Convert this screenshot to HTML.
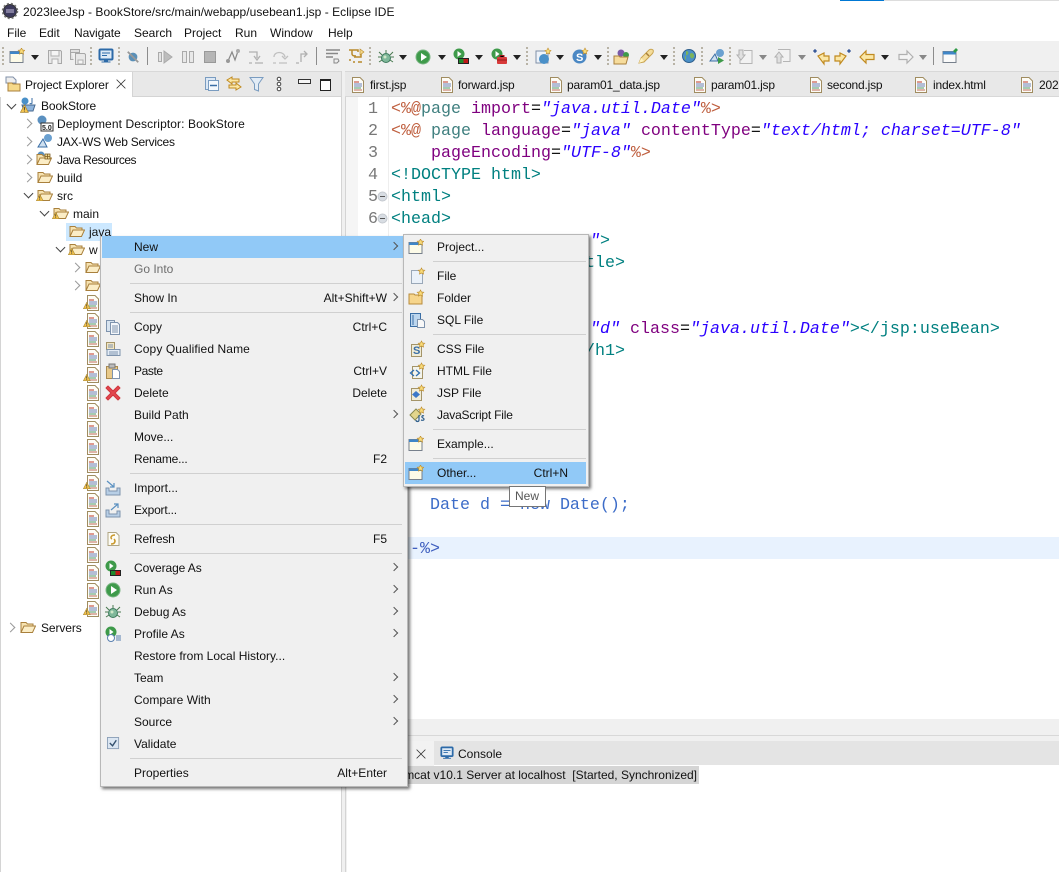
<!DOCTYPE html>
<html><head><meta charset="utf-8"><title>Eclipse</title>
<style>
html,body{margin:0;padding:0;background:#fff;}
#r{position:relative;width:1059px;height:872px;overflow:hidden;background:#fff;font:12px "Liberation Sans","Noto Sans CJK KR",sans-serif;color:#111;}
.b{position:absolute;}
.t{position:absolute;white-space:nowrap;line-height:16px;margin-top:1px;}
.tb{letter-spacing:-.2px;}
.c{position:absolute;white-space:pre;font:16.67px/22px "Liberation Mono",monospace;margin-top:1px;}
.i{position:absolute;width:16px;height:16px;overflow:visible;}
.a{position:absolute;width:0;height:0;border-left:4.5px solid transparent;border-right:4.5px solid transparent;border-top:5px solid #222;top:55px;}
.a.g{border-top-color:#888;}
.d{position:absolute;top:47px;width:2px;height:18px;background:repeating-linear-gradient(#b8b3a6 0 2px,transparent 2px 4px);}
.s{position:absolute;left:130px;width:272px;height:1px;background:#d0d0d0;}
.s2{position:absolute;left:433px;width:153px;height:1px;background:#d0d0d0;}
.ar{position:absolute;left:391px;width:5px;height:5px;border-top:1px solid #555;border-right:1px solid #555;transform:rotate(45deg);}
.tg{position:absolute;width:6px;height:6px;border-top:1.5px solid #9a9a9a;border-right:1.5px solid #9a9a9a;transform:rotate(45deg);}
.to{position:absolute;width:6px;height:6px;border-bottom:1.5px solid #444;border-right:1.5px solid #444;transform:rotate(45deg);}
.p{color:#bf5f3f}.n{color:#3f7f7f}.at{color:#7f007f}.st{color:#2a00ff;font-style:italic}.tag{color:#008080}
</style></head><body>
<svg width="0" height="0" style="position:absolute">
<defs>
<symbol id="file" viewBox="0 0 16 16"><path d="M2.500.5h7.500l3.500 3.500v11.500h-11z" fill="#fdfcf6" stroke="#a08c60"/><path d="M4 5h5" stroke="#c0392b"/><path d="M4 7h8" stroke="#6a7fb5"/><path d="M4 9h8" stroke="#6a7fb5"/><path d="M4 11h7" stroke="#4f9a6a"/><path d="M4 13h8" stroke="#c06a5a"/></symbol>
<symbol id="fold" viewBox="0 0 16 16"><path d="M1 13.500V3.500h5l1.500 1.500h5.500v2.500" fill="#f6e2b0" stroke="#a9803c"/><path d="M1 13.500l3-6.500h11.500l-3 6.500z" fill="#fbedc6" stroke="#a9803c"/></symbol>
<symbol id="warn" viewBox="0 0 16 16"><path d="M5 4.500L9.500 13H.5z" fill="#f5c44e" stroke="#a88630" stroke-width=".8"/><path d="M5 7v3.200M5 11v1" stroke="#333"/></symbol>
<symbol id="nw" viewBox="0 0 16 16"><rect x="1" y="3.500" width="13" height="11" fill="#fdfbe8" stroke="#77808c"/><rect x="1" y="3.500" width="13" height="2.500" fill="#3f86c8"/><path d="M12.500 0l1 2 2.200.300-1.600 1.500.400 2.200-2-1-2 1 .400-2.200-1.600-1.500 2.200-.300z" fill="#f9dc7a" stroke="#c09030" stroke-width=".7"/></symbol>
<symbol id="run" viewBox="0 0 16 16"><circle cx="8" cy="8" r="7" fill="#3e9a4a" stroke="#7ab583"/><path d="M6 4l6 4-6 4z" fill="#fff"/></symbol>
<symbol id="bug" viewBox="0 0 16 16"><path d="M1 3l3 3M15 3l-3 3M0 8h3M16 8h-3M1 13l3-2M15 13l-3-2M8 1v3" stroke="#4a7a50"/><circle cx="8" cy="9" r="4.500" fill="#7fb89a" stroke="#3d7a5c"/><circle cx="7" cy="8" r="1.500" fill="#d0e8c8"/></symbol>
<symbol id="mon" viewBox="0 0 16 16"><rect x="1.500" y="1.500" width="13" height="10" rx="1" fill="#dfeaf5" stroke="#2d6aa8" stroke-width="2"/><path d="M4 5h8M4 7.500h5" stroke="#2d6aa8"/><path d="M6 12h4v1.500h2.500v1h-9v-1H6z" fill="#2d6aa8"/></symbol>
<symbol id="gl" viewBox="0 0 16 16"><circle cx="8" cy="8" r="6.500" fill="#4a90c8" stroke="#2f5f8c"/><path d="M5 3c3 0 3 3 1 4s-3 3-1 5M10 5c2 0 3 1 3 3s-2 3-3 2-2-4 0-5z" fill="#7cb35a"/></symbol>
<symbol id="x" viewBox="0 0 16 16"><path d="M3 3l10 10M13 3L3 13" stroke="#333" stroke-width="1"/></symbol>
</defs>
</svg>
<div id="r">
<!-- title -->
<div class="b" style="left:840px;top:0;width:44px;height:1px;background:#0078d4"></div>
<div class="b" style="left:884px;top:0;width:175px;height:1px;background:#ddd"></div>
<svg class="i" style="left:2px;top:3px"><circle cx="8" cy="8" r="6.500" fill="#3d3a5c" stroke="#333"/><circle cx="8" cy="8" r="7.500" fill="none" stroke="#777" stroke-dasharray="2 2" stroke-width="1.500"/><path d="M4 7h8M4 9h8" stroke="#c8c0e0"/></svg>
<div class="t" style="left:23px;top:3px;letter-spacing:.03px">2023leeJsp - BookStore/src/main/webapp/usebean1.jsp - Eclipse IDE</div>
<div class="t" style="left:7px;top:24px">File</div>
<div class="t" style="left:39px;top:24px">Edit</div>
<div class="t" style="left:74px;top:24px;letter-spacing:-.1px">Navigate</div>
<div class="t" style="left:134px;top:24px">Search</div>
<div class="t" style="left:184px;top:24px">Project</div>
<div class="t" style="left:235px;top:24px">Run</div>
<div class="t" style="left:270px;top:24px">Window</div>
<div class="t" style="left:328px;top:24px">Help</div>
<!-- toolbar -->
<div class="b" style="left:0;top:41px;width:1059px;height:30px;background:#f0f0f0"></div>
<div class="d" style="left:2px"></div><div class="d" style="left:90px"></div><div class="d" style="left:118px"></div><div class="d" style="left:369px"></div><div class="d" style="left:526px"></div><div class="d" style="left:607px"></div><div class="d" style="left:673px"></div><div class="d" style="left:701px"></div><div class="d" style="left:729px"></div>
<div class="b" style="left:147px;top:47px;width:1px;height:18px;background:#8c8c8c"></div>
<div class="b" style="left:316px;top:47px;width:1px;height:18px;background:#8c8c8c"></div>
<div class="b" style="left:933px;top:47px;width:1px;height:18px;background:#8c8c8c"></div>
<svg class="i" style="left:9px;top:48px"><use href="#nw"/></svg><div class="a" style="left:31px"></div>
<svg class="i" style="left:47px;top:49px"><path d="M1.500 1.500h12l1 1v12h-13z" fill="#e8e8e8" stroke="#a8a8a8"/><path d="M4 2v5h8V2M5 15v-5h6v5" fill="#f5f5f5" stroke="#b0b0b0"/></svg>
<svg class="i" style="left:70px;top:49px"><path d="M.5.500h9v3h-9zM.5.500v10h3" fill="#e0e0e0" stroke="#a8a8a8"/><path d="M5.500 4.500h9l1 1v10h-10z" fill="#e8e8e8" stroke="#a8a8a8"/><path d="M8 11v4h5v-4z" fill="#f5f5f5" stroke="#b0b0b0"/></svg>
<svg class="i" style="left:98px;top:48px"><use href="#mon"/></svg>
<svg class="i" style="left:126px;top:50px;width:14px;height:14px" viewBox="0 0 16 16"><circle cx="8" cy="8" r="5" fill="#5a90b8"/><path d="M2 2l12 12" stroke="#999" stroke-width="2"/></svg>
<svg class="i" style="left:157px;top:49px"><path d="M1.500 3.500h3v9h-3z" fill="#e4e4e4" stroke="#aaa"/><path d="M7 2l8 6-8 6z" fill="#bdbdbd" stroke="#aaa"/></svg>
<svg class="i" style="left:180px;top:49px"><path d="M2.500 2.500h4v11h-4zM9.500 2.500h4v11h-4z" fill="#e8e8e8" stroke="#aaa"/></svg>
<svg class="i" style="left:202px;top:49px"><rect x="2.500" y="2.500" width="11" height="11" fill="#b5b5b5" stroke="#999"/></svg>
<svg class="i" style="left:225px;top:48px"><path d="M3 13L7 4l3 8 3-9" fill="none" stroke="#888" stroke-width="1.200"/><circle cx="3" cy="13" r="2" fill="#999"/><circle cx="13" cy="3" r="2" fill="#aaa"/></svg>
<svg class="i" style="left:248px;top:49px"><path d="M1 3h8v6M6 7l3 4 3-4M1 14h3M7 14h8" fill="none" stroke="#b0b0b0" stroke-width="1.300"/></svg>
<svg class="i" style="left:272px;top:49px"><path d="M2 8c0-6 10-6 11 0M10 7l3 3 3-3M1 14h3M7 14h8" fill="none" stroke="#c0c0c0" stroke-width="1.300"/></svg>
<svg class="i" style="left:295px;top:49px"><path d="M6 13V5h5M9 2l3 3-3 3M1 14h3" fill="none" stroke="#b0b0b0" stroke-width="1.300"/></svg>
<svg class="i" style="left:325px;top:48px"><path d="M1 2h14M1 5.500h12M1 9h7" stroke="#888" stroke-width="1.500"/><path d="M9 11h4l1 2-2 2H9z" fill="#eee" stroke="#888"/></svg>
<svg class="i" style="left:348px;top:48px"><path d="M1 2h9v2M4 2v4c0 2 3 2 4 2M13 3v6H6M1 12h2M5 14h2M10 14h4" fill="none" stroke="#b8892a" stroke-width="1.500"/><path d="M12 1l4 3-4 3z" fill="#f3d88a" stroke="#b8892a" stroke-width=".6"/></svg>
<svg class="i" style="left:378px;top:49px"><use href="#bug"/></svg><div class="a" style="left:399px"></div>
<svg class="i" style="left:415px;top:49px"><use href="#run"/></svg><div class="a" style="left:438px"></div>
<svg class="i" style="left:453px;top:48px"><circle cx="6" cy="6" r="5.500" fill="#3e9a4a"/><path d="M4.500 3l4 3-4 3z" fill="#fff"/><rect x="5.500" y="10.500" width="10" height="5" fill="#1d8a2d" stroke="#222"/><rect x="10.500" y="11" width="4.500" height="4" fill="#c01818"/></svg><div class="a" style="left:475px"></div>
<svg class="i" style="left:491px;top:48px"><circle cx="6" cy="6" r="5.500" fill="#3e9a4a"/><path d="M4.500 3l4 3-4 3z" fill="#fff"/><rect x="6" y="9" width="10" height="7" rx="1" fill="#d83a3a"/><path d="M9 9V7.500h4V9M6 12h10" stroke="#9a1c1c"/></svg><div class="a" style="left:513px"></div>
<svg class="i" style="left:535px;top:48px"><rect x="1" y="3" width="12" height="12" fill="#eef3fa" stroke="#8090a8"/><circle cx="9" cy="11" r="5" fill="#4a90c8"/><path d="M13 0l1 2 2 .500-1.500 1.500.300 2-1.800-1-1.800 1 .300-2L10 2.500l2-.500z" fill="#f9dc7a" stroke="#c09030" stroke-width=".6"/></svg><div class="a" style="left:556px"></div>
<svg class="i" style="left:572px;top:48px"><circle cx="7.500" cy="8.500" r="7" fill="#4b88c4"/><text x="4" y="13" font-size="11" font-weight="bold" fill="#fff" font-family="Liberation Sans">S</text><path d="M13 0l1 2 2 .500-1.500 1.500.300 2-1.800-1-1.800 1 .300-2L10 2.500l2-.500z" fill="#f9dc7a" stroke="#c09030" stroke-width=".6"/></svg><div class="a" style="left:594px"></div>
<svg class="i" style="left:614px;top:49px"><circle cx="7" cy="4" r="3.500" fill="#7a5aa8"/><circle cx="12" cy="6" r="3" fill="#3e9a4a"/><path d="M0 15V7h5l1 1h8l-2 7z" fill="#f6dc9c" stroke="#a9803c"/></svg>
<svg class="i" style="left:638px;top:48px"><path d="M1 15l2-5 8-8c1-1 3-1 4 0s0 3-1 4l-8 8z" fill="#f4dc9a" stroke="#c9a450"/><path d="M1 15l2-5 3 3z" fill="#fff3c0"/><path d="M8 5l3 3" stroke="#a9803c" stroke-width="1.500"/></svg><div class="a" style="left:660px"></div>
<svg class="i" style="left:681px;top:48px"><use href="#gl"/></svg>
<svg class="i" style="left:709px;top:48px"><path d="M1 13L6 6l3 7z" fill="#cfe0f0" stroke="#3a6ea5"/><circle cx="11" cy="5" r="4" fill="#6aa0d0"/><path d="M9 9l6 3.500-6 3.500z" fill="#3e9a4a"/></svg>
<svg class="i" style="left:737px;top:49px"><path d="M7 1.500h8v13H3v-4" fill="#f2f2f2" stroke="#b5b5b5"/><path d="M2 1h4v5h2l-4 5-4-5h2z" fill="#e0e0e0" stroke="#b0b0b0"/></svg><div class="a g" style="left:759px"></div>
<svg class="i" style="left:775px;top:48px"><path d="M3 1.500h12v12H8" fill="#f2f2f2" stroke="#b5b5b5"/><path d="M6 15h-4V9H0l4-5 4 5H6z" fill="#e0e0e0" stroke="#b0b0b0"/></svg><div class="a g" style="left:798px"></div>
<svg class="i" style="left:813px;top:49px"><path d="M5 7l6-3v3h5v5h-5v3z" fill="#fbe7a6" stroke="#c08a20" stroke-width="1.200"/><path d="M1 1l2 2M3 1L1 3M4 2H0M2 0v4" stroke="#3a5a9a"/></svg>
<svg class="i" style="left:835px;top:49px"><path d="M11 7L5 4v3H0v5h5v3z" fill="#fbe7a6" stroke="#c08a20" stroke-width="1.200"/><path d="M13 1l2 2M15 1l-2 2M16 2h-4M14 0v4" stroke="#3a5a9a"/></svg>
<svg class="i" style="left:859px;top:49px"><path d="M1 8l6-6v3.500h8v5H7V14z" fill="#fbe7a6" stroke="#c08a20" stroke-width="1.200"/></svg><div class="a" style="left:881px"></div>
<svg class="i" style="left:898px;top:49px"><path d="M15 8L9 2v3.500H1v5h8V14z" fill="#f4f4f4" stroke="#b0b0b0" stroke-width="1.200"/></svg><div class="a g" style="left:919px"></div>
<svg class="i" style="left:942px;top:48px"><rect x="1" y="3.500" width="13" height="11" fill="#fafafa" stroke="#77808c"/><rect x="1" y="3.500" width="13" height="3" fill="#3f86c8"/><path d="M9 7l3-3-1-1 3-3 2 2-3 3-1-1-3 3z" fill="#2f9a46"/></svg>
<!-- panels -->
<div class="b" style="left:0;top:71px;width:341px;height:25px;background:#e8e8e8;border-top:1px solid #d8d8d8;box-sizing:border-box"></div>
<div class="b" style="left:0;top:72px;width:133px;height:25px;background:#fff;border-right:1px solid #d4d4d4;box-sizing:border-box"></div>
<div class="b" style="left:133px;top:96px;width:208px;height:1px;background:#d4d4d4"></div>
<div class="b" style="left:341px;top:71px;width:6px;height:801px;background:#f0f0f0"></div>
<div class="b" style="left:341px;top:71px;width:1px;height:801px;background:#d4d4d4"></div>
<div class="b" style="left:0;top:97px;width:1px;height:775px;background:#d4d4d4"></div>
<div class="b" style="left:345px;top:71px;width:714px;height:26px;background:#e8e8e8;border-top:1px solid #d8d8d8;border-bottom:1px solid #d8d8d8;box-sizing:border-box"></div>
<svg class="i" style="left:5px;top:76px"><path d="M1 1h7l3 3v3H1z" fill="#eee" stroke="#8090a8"/><path d="M3 15V7h4l1 1h7v7z" fill="#f6d98a" stroke="#a9803c"/></svg>
<div class="t" style="left:25px;top:76px;letter-spacing:-.1px">Project Explorer</div>
<svg class="i" style="left:114px;top:77px;width:14px;height:14px" viewBox="0 0 16 16"><use href="#x"/></svg>
<svg class="i" style="left:204px;top:76px"><rect x="1.500" y="1.500" width="10" height="12" fill="#dce8f5" stroke="#7a9cc0"/><rect x="4.500" y="4.500" width="10" height="10" fill="#f5f9fd" stroke="#7a9cc0"/><path d="M6 9.500h7" stroke="#3a6ea5" stroke-width="1.500"/></svg>
<svg class="i" style="left:226px;top:76px"><path d="M1 4l5-3v2h7v3H6v2zM15 11l-5 3v-2H3V9h7V7z" fill="#fbe7a6" stroke="#c08a20"/></svg>
<svg class="i" style="left:249px;top:76px"><path d="M1 1.500h13L9.500 8v7l-4-1.500V8z" fill="#e2ecf6" stroke="#7a9cc0"/></svg>
<svg class="i" style="left:271px;top:76px"><circle cx="8" cy="3" r="1.800" fill="#fff" stroke="#444"/><circle cx="8" cy="8" r="1.800" fill="#fff" stroke="#444"/><circle cx="8" cy="13" r="1.800" fill="#fff" stroke="#444"/></svg>
<div class="b" style="left:298px;top:79px;width:11px;height:3px;border:1px solid #333;background:#f5f5f5"></div>
<div class="b" style="left:320px;top:79px;width:9px;height:9px;border:1px solid #222;border-top-width:2px;background:#fff"></div>
<!-- tabs -->
<svg class="i" style="left:350px;top:77px"><use href="#file"/></svg><div class="t tb" style="left:370px;top:76px">first.jsp</div>
<svg class="i" style="left:439px;top:77px"><use href="#file"/></svg><div class="t tb" style="left:458px;top:76px">forward.jsp</div>
<svg class="i" style="left:548px;top:77px"><use href="#file"/></svg><div class="t tb" style="left:567px;top:76px">param01_data.jsp</div>
<svg class="i" style="left:692px;top:77px"><use href="#file"/></svg><div class="t tb" style="left:711px;top:76px">param01.jsp</div>
<svg class="i" style="left:808px;top:77px"><use href="#file"/></svg><div class="t tb" style="left:827px;top:76px">second.jsp</div>
<svg class="i" style="left:913px;top:77px"><use href="#file"/></svg><div class="t tb" style="left:933px;top:76px">index.html</div>
<svg class="i" style="left:1019px;top:77px"><use href="#file"/></svg><div class="t tb" style="left:1039px;top:76px">202</div>
<!-- editor -->
<div class="b" style="left:345px;top:97px;width:1px;height:640px;background:#d4d4d4"></div>
<div class="b" style="left:346px;top:97px;width:12px;height:622px;background:#f5f5f5"></div>
<div class="b" style="left:388px;top:97px;width:1px;height:622px;background:#eee"></div>
<div class="b" style="left:346px;top:537px;width:713px;height:22px;background:#e8f2fe"></div>
<div class="c" style="left:358px;width:20px;top:98px;color:#787878;text-align:right">1
2
3
4
5
6</div>
<svg class="i" style="left:377px;top:191px;width:11px;height:11px" viewBox="0 0 11 11"><circle cx="5.500" cy="5.500" r="4.500" fill="#d8dde3" stroke="#c4c9cf"/><path d="M3 5.500h5" stroke="#555"/></svg>
<svg class="i" style="left:377px;top:213px;width:11px;height:11px" viewBox="0 0 11 11"><circle cx="5.500" cy="5.500" r="4.500" fill="#d8dde3" stroke="#c4c9cf"/><path d="M3 5.500h5" stroke="#555"/></svg>
<div class="c" style="left:391px;top:98px"><span class="p">&lt;%@</span><span class="n">page</span> <span class="at">import</span>=<span class="st">"java.util.Date"</span><span class="p">%&gt;</span></div>
<div class="c" style="left:391px;top:120px"><span class="p">&lt;%@</span> <span class="n">page</span> <span class="at">language</span>=<span class="st">"java"</span> <span class="at">contentType</span>=<span class="st">"text/html; charset=UTF-8"</span></div>
<div class="c" style="left:431px;top:142px"><span class="at">pageEncoding</span>=<span class="st">"UTF-8"</span><span class="p">%&gt;</span></div>
<div class="c tag" style="left:391px;top:164px">&lt;!DOCTYPE html&gt;</div>
<div class="c tag" style="left:391px;top:186px">&lt;html&gt;</div>
<div class="c tag" style="left:391px;top:208px">&lt;head&gt;</div>
<div class="c" style="left:590px;top:230px"><span class="st">"</span><span class="tag">&gt;</span></div>
<div class="c tag" style="left:545px;top:252px">&lt;/title&gt;</div>
<div class="c" style="left:590px;top:318px"><span class="st">"d"</span> <span class="at">class</span>=<span class="st">"java.util.Date"</span><span class="tag">&gt;&lt;/jsp:useBean&gt;</span></div>
<div class="c tag" style="left:575px;top:340px">&lt;/h1&gt;</div>
<div class="c" style="left:430px;top:494px;color:#3c6cc8">Date d = new Date();</div>
<div class="c" style="left:410px;top:538px;color:#3f5fbf">-%&gt;</div>
<!-- bottom -->
<div class="b" style="left:345px;top:719px;width:714px;height:16px;background:#f0f0f0;border-bottom:1px solid #d8d8d8"></div>
<div class="b" style="left:345px;top:736px;width:714px;height:5px;background:#f0f0f0"></div>
<div class="b" style="left:345px;top:741px;width:714px;height:24px;background:#e4e4e4"></div>
<div class="b" style="left:345px;top:741px;width:89px;height:25px;background:#f2f2f2"></div>
<div class="b" style="left:345px;top:766px;width:1px;height:106px;background:#d4d4d4"></div>
<svg class="i" style="left:414px;top:747px;width:14px;height:14px" viewBox="0 0 16 16"><use href="#x"/></svg>
<svg class="i" style="left:440px;top:746px;width:14px;height:14px" viewBox="0 0 16 16"><use href="#mon"/></svg>
<div class="t" style="left:458px;top:745px">Console</div>
<div class="b" style="left:346px;top:766px;width:353px;height:18px;background:#d5d5d5"></div>
<div class="t" style="right:362px;top:766px">Tomcat v10.1 Server at localhost&nbsp; [Started, Synchronized]</div>
<!-- tree -->
<div class="to" style="left:8px;top:101px"></div>
<svg class="i" style="left:20px;top:97px"><circle cx="5" cy="4" r="3.500" fill="#4a90c8"/><path d="M2 8h13l-2 6H4z" fill="#8fb4dc" stroke="#47698f"/><path d="M12 1v5c0 1-2 1-2 0" fill="none" stroke="#3a6ea5"/></svg>
<svg class="i" style="left:20px;top:101px;width:14px;height:14px" viewBox="0 0 16 16"><use href="#warn"/></svg>
<div class="t" style="left:41px;top:97px;letter-spacing:-.1px">BookStore</div>
<div class="tg" style="left:24px;top:120px"></div>
<svg class="i" style="left:37px;top:115px"><circle cx="5" cy="5" r="4.500" fill="#5a90c0"/><rect x="4" y="8" width="12" height="8" fill="#fff" stroke="#333"/><text x="5" y="15" font-size="7" font-weight="bold" fill="#222" font-family="Liberation Sans">5.0</text></svg>
<div class="t" style="left:57px;top:115px;letter-spacing:.1px">Deployment Descriptor: BookStore</div>
<div class="tg" style="left:24px;top:138px"></div>
<svg class="i" style="left:37px;top:133px"><path d="M1 14L6 6l4 8z" fill="#cfe0f0" stroke="#3a6ea5"/><circle cx="11" cy="5" r="4" fill="#6aa0d0"/></svg>
<div class="t" style="left:57px;top:133px;letter-spacing:-.25px">JAX-WS Web Services</div>
<div class="tg" style="left:24px;top:156px"></div>
<svg class="i" style="left:36px;top:151px"><circle cx="5" cy="4" r="3.500" fill="#5a90c0"/><use href="#fold"/><path d="M9 3v5h5V3zM11.500 3v5M9 5.500h5" fill="#f0d890" stroke="#7a5a20" stroke-width=".8"/></svg>
<div class="t" style="left:57px;top:151px;letter-spacing:-.5px">Java Resources</div>
<div class="tg" style="left:24px;top:174px"></div>
<svg class="i" style="left:37px;top:169px"><use href="#fold"/></svg>
<div class="t" style="left:57px;top:169px">build</div>
<div class="to" style="left:25px;top:190px"></div>
<svg class="i" style="left:37px;top:187px"><use href="#fold"/></svg>
<svg class="i" style="left:36px;top:191px;width:12px;height:12px" viewBox="0 0 16 16"><use href="#warn"/></svg>
<div class="t" style="left:57px;top:187px">src</div>
<div class="to" style="left:41px;top:208px"></div>
<svg class="i" style="left:53px;top:205px"><use href="#fold"/></svg>
<svg class="i" style="left:52px;top:209px;width:12px;height:12px" viewBox="0 0 16 16"><use href="#warn"/></svg>
<div class="t" style="left:73px;top:205px">main</div>
<div class="b" style="left:66px;top:223px;width:46px;height:18px;background:#cce8ff"></div>
<svg class="i" style="left:69px;top:223px"><use href="#fold"/></svg>
<div class="t" style="left:89px;top:223px">java</div>
<div class="to" style="left:57px;top:244px"></div>
<svg class="i" style="left:69px;top:241px"><use href="#fold"/></svg>
<svg class="i" style="left:68px;top:245px;width:12px;height:12px" viewBox="0 0 16 16"><use href="#warn"/></svg>
<div class="t" style="left:89px;top:241px">w</div>
<div class="tg" style="left:72px;top:264px"></div><svg class="i" style="left:85px;top:259px"><use href="#fold"/></svg>
<div class="tg" style="left:72px;top:282px"></div><svg class="i" style="left:85px;top:277px"><use href="#fold"/></svg>
<svg class="i" style="left:85px;top:295px"><use href="#file"/></svg><svg class="i" style="left:83px;top:299px;width:12px;height:12px" viewBox="0 0 16 16"><use href="#warn"/></svg>
<svg class="i" style="left:85px;top:313px"><use href="#file"/></svg><svg class="i" style="left:83px;top:317px;width:12px;height:12px" viewBox="0 0 16 16"><use href="#warn"/></svg>
<svg class="i" style="left:85px;top:331px"><use href="#file"/></svg>
<svg class="i" style="left:85px;top:349px"><use href="#file"/></svg>
<svg class="i" style="left:85px;top:367px"><use href="#file"/></svg><svg class="i" style="left:83px;top:371px;width:12px;height:12px" viewBox="0 0 16 16"><use href="#warn"/></svg>
<svg class="i" style="left:85px;top:385px"><use href="#file"/></svg>
<svg class="i" style="left:85px;top:403px"><use href="#file"/></svg>
<svg class="i" style="left:85px;top:421px"><use href="#file"/></svg>
<svg class="i" style="left:85px;top:439px"><use href="#file"/></svg>
<svg class="i" style="left:85px;top:457px"><use href="#file"/></svg>
<svg class="i" style="left:85px;top:475px"><use href="#file"/></svg><svg class="i" style="left:83px;top:479px;width:12px;height:12px" viewBox="0 0 16 16"><use href="#warn"/></svg>
<svg class="i" style="left:85px;top:493px"><use href="#file"/></svg>
<svg class="i" style="left:85px;top:511px"><use href="#file"/></svg>
<svg class="i" style="left:85px;top:529px"><use href="#file"/></svg>
<svg class="i" style="left:85px;top:547px"><use href="#file"/></svg>
<svg class="i" style="left:85px;top:565px"><use href="#file"/></svg>
<svg class="i" style="left:85px;top:583px"><use href="#file"/></svg>
<svg class="i" style="left:85px;top:601px"><use href="#file"/></svg><svg class="i" style="left:83px;top:605px;width:12px;height:12px" viewBox="0 0 16 16"><use href="#warn"/></svg>
<div class="tg" style="left:7px;top:624px"></div>
<svg class="i" style="left:20px;top:619px"><use href="#fold"/></svg>
<div class="t" style="left:41px;top:619px;letter-spacing:-.1px">Servers</div>
<!-- main menu -->
<div class="b" style="left:100px;top:236px;width:308px;height:551px;background:#f0f0f0;border:1px solid #b8b8b8;box-sizing:border-box;box-shadow:2px 2px 3px rgba(0,0,0,.55)"></div>
<div class="b" style="left:102px;top:236px;width:301px;height:22px;background:#91c9f7"></div>
<div class="s" style="top:283px"></div><div class="s" style="top:312px"></div><div class="s" style="top:473px"></div><div class="s" style="top:524px"></div><div class="s" style="top:553px"></div><div class="s" style="top:758px"></div>
<div class="t" style="left:134px;top:238px">New</div><div class="ar" style="top:243px"></div>
<div class="t" style="left:134px;top:260px;color:#6d6d6d">Go Into</div>
<div class="t" style="left:134px;top:289px">Show In</div><div class="t" style="right:672px;top:289px">Alt+Shift+W</div><div class="ar" style="top:294px"></div>
<div class="t" style="left:134px;top:318px">Copy</div><div class="t" style="right:672px;top:318px">Ctrl+C</div>
<div class="t" style="left:134px;top:340px;letter-spacing:.1px">Copy Qualified Name</div>
<div class="t" style="left:134px;top:362px;letter-spacing:-.4px">Paste</div><div class="t" style="right:672px;top:362px">Ctrl+V</div>
<div class="t" style="left:134px;top:384px">Delete</div><div class="t" style="right:672px;top:384px">Delete</div>
<div class="t" style="left:134px;top:406px">Build Path</div><div class="ar" style="top:411px"></div>
<div class="t" style="left:134px;top:428px">Move...</div>
<div class="t" style="left:134px;top:450px;letter-spacing:-.2px">Rename...</div><div class="t" style="right:672px;top:450px">F2</div>
<div class="t" style="left:134px;top:479px">Import...</div>
<div class="t" style="left:134px;top:501px;letter-spacing:-.2px">Export...</div>
<div class="t" style="left:134px;top:530px;letter-spacing:-.2px">Refresh</div><div class="t" style="right:672px;top:530px">F5</div>
<div class="t" style="left:134px;top:559px;letter-spacing:-.1px">Coverage As</div><div class="ar" style="top:564px"></div>
<div class="t" style="left:134px;top:581px">Run As</div><div class="ar" style="top:586px"></div>
<div class="t" style="left:134px;top:603px">Debug As</div><div class="ar" style="top:608px"></div>
<div class="t" style="left:134px;top:625px">Profile As</div><div class="ar" style="top:630px"></div>
<div class="t" style="left:134px;top:647px">Restore from Local History...</div>
<div class="t" style="left:134px;top:669px">Team</div><div class="ar" style="top:674px"></div>
<div class="t" style="left:134px;top:691px">Compare With</div><div class="ar" style="top:696px"></div>
<div class="t" style="left:134px;top:713px">Source</div><div class="ar" style="top:718px"></div>
<div class="t" style="left:134px;top:735px">Validate</div>
<div class="t" style="left:134px;top:764px">Properties</div><div class="t" style="right:672px;top:764px">Alt+Enter</div>
<svg class="i" style="left:105px;top:319px"><path d="M1.500 1.500h8v11h-8z" fill="#d8e4f0" stroke="#7e93ad"/><path d="M5.500 3.500h7l2 2v10h-9z" fill="#f4f7fb" stroke="#7e93ad"/><path d="M7 7h6M7 9h6M7 11h6M7 13h6" stroke="#7e93ad"/></svg>
<svg class="i" style="left:105px;top:341px"><path d="M1.500 1.500h8v7h-8z" fill="#f2e6c4" stroke="#a49468"/><path d="M2 8.500h13v6H2z" fill="#e4ecf6" stroke="#7e93ad"/><path d="M3 4h5M3 6h5M4 11h9M4 13h9" stroke="#7e93ad"/></svg>
<svg class="i" style="left:105px;top:363px"><rect x="1.500" y="3.500" width="11" height="12" fill="#e8c98a" stroke="#a98a50"/><rect x="4" y="1" width="6" height="4" fill="#bbb" stroke="#777"/><path d="M7.500 6.500h5l2 2v7h-7z" fill="#fff" stroke="#7e93ad"/></svg>
<svg class="i" style="left:105px;top:385px"><path d="M3 1l5 5 5-5 2 2-5 5 5 5-2 2-5-5-5 5-2-2 5-5-5-5z" fill="#e2474f" stroke="#d0353d" stroke-linejoin="round"/></svg>
<svg class="i" style="left:105px;top:480px"><path d="M1 8v7h14V8h-3v3H4V8z" fill="#b8cfe6" stroke="#7e93ad"/><path d="M2 1l7 6M9 3v4H5" fill="none" stroke="#5a90c0" stroke-width="1.200"/></svg>
<svg class="i" style="left:105px;top:502px"><path d="M1 8v7h14V9h-3v3H4V8z" fill="#b8cfe6" stroke="#7e93ad"/><path d="M6 8l7-6M9 2h4v4" fill="none" stroke="#5a90c0" stroke-width="1.200"/></svg>
<svg class="i" style="left:105px;top:531px"><path d="M3 1.500h8l3 3v10H3z" fill="#fdfcf4" stroke="#b0a684"/><path d="M10 4C6 4 5 7 7 8M6 13c4 0 5-3 3-5" fill="none" stroke="#c9982c" stroke-width="1.500"/></svg>
<svg class="i" style="left:105px;top:560px"><circle cx="6" cy="6" r="5.500" fill="#3e9a4a"/><path d="M4.500 3l4 3-4 3z" fill="#fff"/><rect x="5.500" y="10.500" width="10" height="5" fill="#1d8a2d" stroke="#222"/><rect x="10.500" y="11" width="4.500" height="4" fill="#c01818"/></svg>
<svg class="i" style="left:105px;top:582px"><use href="#run"/></svg>
<svg class="i" style="left:105px;top:604px"><use href="#bug"/></svg>
<svg class="i" style="left:105px;top:626px"><circle cx="6" cy="6" r="5.500" fill="#3e9a4a"/><path d="M4.500 3l4 3-4 3z" fill="#fff"/><circle cx="6" cy="12" r="3.500" fill="#fff" stroke="#5a80b0"/><path d="M11 10h5M11 12h5M11 14h5" stroke="#5a80b0"/></svg>
<svg class="i" style="left:107px;top:737px;width:13px;height:13px" viewBox="0 0 14 14"><rect x=".5" y=".5" width="12" height="12" fill="#dbe6f2" stroke="#8ca0b8"/><path d="M3 6.500l3 3 4-6" fill="none" stroke="#34506e" stroke-width="1.500"/></svg>
<!-- submenu -->
<div class="b" style="left:403px;top:234px;width:186px;height:253px;background:#f0f0f0;border:1px solid #b8b8b8;box-sizing:border-box;box-shadow:2px 2px 3px rgba(0,0,0,.55)"></div>
<div class="b" style="left:405px;top:462px;width:181px;height:22px;background:#91c9f7"></div>
<div class="s2" style="top:261px"></div><div class="s2" style="top:334px"></div><div class="s2" style="top:429px"></div><div class="s2" style="top:458px"></div>
<svg class="i" style="left:408px;top:239px"><use href="#nw"/></svg><div class="t" style="left:437px;top:238px">Project...</div>
<svg class="i" style="left:409px;top:268px"><path d="M2.500 2.500h8l3 3v10h-11z" fill="#eaf1f9" stroke="#9aa8b8"/><path d="M12.500 0l1 2 2.200.300-1.600 1.500.400 2.200-2-1-2 1 .400-2.200-1.600-1.500 2.200-.300z" fill="#f9dc7a" stroke="#c09030" stroke-width=".7"/></svg><div class="t" style="left:437px;top:267px">File</div>
<svg class="i" style="left:408px;top:290px"><path d="M1 14V4h5l1 1h7v9z" fill="#f6d58c" stroke="#b88c3c"/><path d="M12.500 0l1 2 2.200.300-1.600 1.500.400 2.200-2-1-2 1 .400-2.200-1.600-1.500 2.200-.300z" fill="#f9dc7a" stroke="#c09030" stroke-width=".7"/></svg><div class="t" style="left:437px;top:289px">Folder</div>
<svg class="i" style="left:409px;top:312px"><rect x="1.500" y="1.500" width="10" height="13" fill="#bcd6ee" stroke="#3a6ea5"/><path d="M4 3v10" stroke="#3a6ea5"/><path d="M8.500 7.500h5l2 2v6h-7z" fill="#f8f8f8" stroke="#7e93ad"/></svg><div class="t" style="left:437px;top:311px">SQL File</div>
<svg class="i" style="left:409px;top:341px"><path d="M2.500 3.500h10v12h-10z" fill="#f0ecd8" stroke="#a49468"/><text x="4" y="13" font-size="11" font-weight="bold" fill="#3a6ea5" font-family="Liberation Sans">S</text><path d="M12.500 0l1 2 2.200.300-1.600 1.500.400 2.200-2-1-2 1 .400-2.200-1.600-1.500 2.200-.300z" fill="#f9dc7a" stroke="#c09030" stroke-width=".7"/></svg><div class="t" style="left:437px;top:340px">CSS File</div>
<svg class="i" style="left:409px;top:363px"><path d="M3.500 3.500h10v12h-10z" fill="#f4f4ec" stroke="#a49468"/><path d="M5 7L1.500 10 5 13M7 7l3.500 3L7 13" fill="none" stroke="#2f6eb0" stroke-width="1.300"/><path d="M12.500 0l1 2 2.200.300-1.600 1.500.400 2.200-2-1-2 1 .400-2.200-1.600-1.500 2.200-.300z" fill="#f9dc7a" stroke="#c09030" stroke-width=".7"/></svg><div class="t" style="left:437px;top:362px">HTML File</div>
<svg class="i" style="left:409px;top:385px"><path d="M2.500 3.500h10v12h-10z" fill="#f0ecd8" stroke="#a49468"/><path d="M7 6l4 3.500L7 13 3 9.500z" fill="#3c78c8"/><path d="M12.500 0l1 2 2.200.300-1.600 1.500.400 2.200-2-1-2 1 .400-2.200-1.600-1.500 2.200-.300z" fill="#f9dc7a" stroke="#c09030" stroke-width=".7"/></svg><div class="t" style="left:437px;top:384px">JSP File</div>
<svg class="i" style="left:409px;top:407px"><path d="M1 8l6-6 5 5-6 6z" fill="#e3d68c" stroke="#8a8a50"/><path d="M10 8v5c0 2-3 2-3 0M15 9c-2-1-3 1-1 2s1 3-2 2" fill="none" stroke="#2f5f8c" stroke-width="1.200"/><path d="M12.500 0l1 2 2.200.300-1.600 1.500.400 2.200-2-1-2 1 .400-2.200-1.600-1.500 2.200-.300z" fill="#f9dc7a" stroke="#c09030" stroke-width=".7"/></svg><div class="t" style="left:437px;top:406px;letter-spacing:-.2px">JavaScript File</div>
<svg class="i" style="left:408px;top:436px"><use href="#nw"/></svg><div class="t" style="left:437px;top:435px">Example...</div>
<svg class="i" style="left:408px;top:465px"><use href="#nw"/></svg><div class="t" style="left:437px;top:464px">Other...</div><div class="t" style="right:491px;top:464px">Ctrl+N</div>
<!-- tooltip -->
<div class="b" style="left:509px;top:486px;width:37px;height:21px;background:#fff;border:1px solid #767676;box-sizing:border-box"></div>
<div class="t" style="left:515px;top:487px;color:#575757">New</div>
</div>
</body></html>
